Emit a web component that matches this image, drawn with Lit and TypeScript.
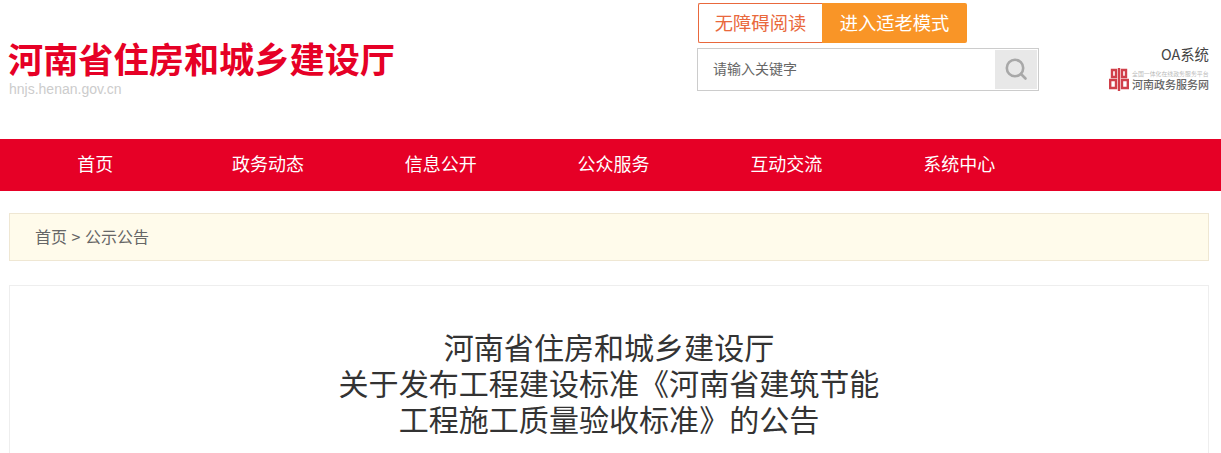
import { LitElement, html, css } from "lit";
import { customElement } from "lit/decorators.js";

const NAV = ["首页", "政务动态", "信息公开", "公众服务", "互动交流", "系统中心"];

@customElement("app-root")
export class AppRoot extends LitElement {
  static styles = css`
    :host {
      display: block;
      width: 1221px;
      height: 453px;
      overflow: hidden;
      background: #fff;
      font-family: "Noto Sans CJK SC", "Liberation Sans", sans-serif;
      color: #333;
    }
    .header {
      display: flex;
      height: 139px;
      box-sizing: border-box;
      padding: 3px 12px 0 8px;
    }
    .brand {
      width: 689px;
      padding-top: 32px;
      box-sizing: border-box;
    }
    .site-title {
      font-size: 35.2px;
      line-height: 46px;
      font-weight: 700;
      color: #e60026;
      white-space: nowrap;
    }
    .site-url {
      font-family: "Liberation Sans", sans-serif;
      font-size: 14px;
      line-height: 16px;
      padding-left: 1px;
      color: #ccc;
    }
    .tools {
      width: 342px;
      display: flex;
      flex-direction: column;
      gap: 5px;
    }
    .buttons {
      display: flex;
      height: 40px;
      margin-left: 1px;
    }
    .btn {
      display: flex;
      align-items: center;
      justify-content: center;
      box-sizing: border-box;
      font-size: 18.3px;
      padding-bottom: 3px;
      border-radius: 2px 0 0 2px;
    }
    .btn-outline {
      width: 124px;
      color: #e9683c;
      border: 1px solid #e9683c;
      border-right: 0;
    }
    .btn-solid {
      width: 145px;
      background: #f99527;
      color: #fff;
      border-radius: 0 2px 2px 0;
    }
    .search {
      display: flex;
      justify-content: space-between;
      height: 43px;
      box-sizing: border-box;
      border: 1px solid #ccc;
      padding: 1px;
    }
    .placeholder {
      font-size: 14px;
      line-height: 36px;
      padding-left: 14px;
      color: #666;
    }
    .search-btn {
      width: 42px;
      background: #e8e8e8;
      display: flex;
      align-items: center;
      justify-content: center;
      padding-bottom: 2px;
      box-sizing: border-box;
    }
    .side {
      flex: 1;
      display: flex;
      flex-direction: column;
      align-items: flex-end;
      padding-top: 42px;
    }
    .oa {
      font-size: 14.4px;
      line-height: 18px;
      color: #444;
    }
    .gov {
      display: flex;
      gap: 3px;
      margin-top: 5px;
      margin-right: -1px;
      width: 101px;
    }
    .gov-text {
      display: flex;
      flex-direction: column;
      justify-content: flex-end;
      white-space: nowrap;
    }
    .gov-small {
      font-size: 5.9px;
      line-height: 9px;
      color: #bbb;
    }
    .gov-big {
      font-size: 11px;
      line-height: 13px;
      font-weight: 500;
      color: #666;
    }
    .nav {
      display: flex;
      height: 52px;
      background: #e60026;
      padding-left: 8.8px;
    }
    .nav-item {
      width: 172.8px;
      text-align: center;
      color: #fff;
      font-size: 18px;
      line-height: 49px;
    }
    .crumb {
      margin: 22px 12px 0 9px;
      height: 48px;
      box-sizing: border-box;
      background: #fffbeb;
      border: 1px solid #efe7d3;
      padding-left: 25px;
      font-size: 16px;
      line-height: 45px;
      color: #666;
      word-spacing: 1px;
    }
    .card {
      margin: 24px 12px 0 9px;
      height: 300px;
      box-sizing: border-box;
      border: 1px solid #eee;
      padding-top: 42px;
      text-align: center;
    }
    .headline {
      margin: 0 auto;
      font-size: 30.05px;
      line-height: 36px;
      font-weight: 400;
      color: #333;
    }
  `;

  render() {
    return html`
      <div class="header">
        <div class="brand">
          <div class="site-title">河南省住房和城乡建设厅</div>
          <div class="site-url">hnjs.henan.gov.cn</div>
        </div>
        <div class="tools">
          <div class="buttons">
            <div class="btn btn-outline">无障碍阅读</div>
            <div class="btn btn-solid">进入适老模式</div>
          </div>
          <div class="search">
            <div class="placeholder">请输入关键字</div>
            <div class="search-btn">
              <svg width="24" height="24" viewBox="0 0 24 24" fill="none" stroke="#a8a8a8" stroke-width="2.6">
                <circle cx="11" cy="11" r="8.2"></circle>
                <path d="M17 17l4.5 4.5" stroke-linecap="round"></path>
              </svg>
            </div>
          </div>
        </div>
        <div class="side">
          <div class="oa">OA系统</div>
          <div class="gov">
            <svg width="20" height="23" viewBox="0 0 20 23" fill="none" stroke="#d0404a" stroke-width="2.4">
              <path d="M10 0v23"></path>
              <path d="M3 2h4v7H3zM13 2h4v7h-4z"></path>
              <path d="M1.2 12h5.8v8H1.2zM13 12h5.8v8H13z"></path>
            </svg>
            <div class="gov-text">
              <div class="gov-small">全国一体化在线政务服务平台</div>
              <div class="gov-big">河南政务服务网</div>
            </div>
          </div>
        </div>
      </div>
      <nav class="nav">
        ${NAV.map((n) => html`<div class="nav-item">${n}</div>`)}
      </nav>
      <div class="crumb">首页 &gt; 公示公告</div>
      <div class="card">
        <h1 class="headline">河南省住房和城乡建设厅<br />关于发布工程建设标准《河南省建筑节能<br />工程施工质量验收标准》的公告</h1>
      </div>
    `;
  }
}
